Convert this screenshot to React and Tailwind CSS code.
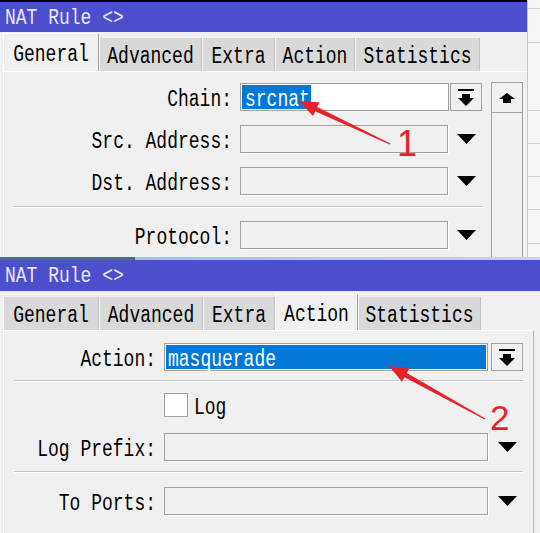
import React from "react";

const mono = "font-['Liberation_Mono',monospace]";

function T({ children, s = "scale-y-[1.35] translate-y-[2px]" }) {
  return <span className={`inline-block whitespace-pre ${s}`}>{children}</span>;
}

function TitleBar({ h }) {
  return (
    <div className={`${h} shrink-0 bg-[#4c4fcc] flex items-center pl-[5px] text-[18px] text-[#e8e8ff]`}>
      <T s="scale-y-[1.25] translate-y-[1px]">NAT Rule &lt;&gt;</T>
    </div>
  );
}

function Tabs({ tabs, active, activeH }) {
  return (
    <div className="h-[39px] shrink-0 flex items-end pl-[3px]">
      {tabs.map(([name, w]) =>
        name === active ? (
          <div
            key={name}
            className={`${w} ${activeH} bg-[#f0f0f0] border-t border-l border-white border-r border-r-[#a0a0a0] flex items-center justify-center text-[18px]`}
          >
            <T>{name}</T>
          </div>
        ) : (
          <div
            key={name}
            className={`${w} h-[33px] bg-[#d9d9d9] border-l border-l-[#f6f6f6] border-r border-r-[#c2c2c2] flex items-center justify-center text-[18px]`}
          >
            <T>{name}</T>
          </div>
        )
      )}
    </div>
  );
}

const BarArrow = () => (
  <svg width="16" height="17" viewBox="0 0 16 17">
    <rect x="0" y="0" width="16" height="2" fill="#000" />
    <path d="M4 5H12V9H16L8 17L0 9H4Z" fill="#000" />
  </svg>
);

const TriDown = () => (
  <svg width="19" height="10" viewBox="0 0 19 10">
    <path d="M0 0H19L9.5 10Z" fill="#000" />
  </svg>
);

const UpArrow = () => (
  <svg width="16" height="10" viewBox="0 0 16 10">
    <path d="M8 0L16 6H12V10H4V6H0Z" fill="#000" />
  </svg>
);

const DropBtn = () => (
  <div className="w-[32px] h-[28px] border border-[#a0a0a0] bg-[#f0f0f0] flex items-center justify-center">
    <BarArrow />
  </div>
);

const TriBox = () => (
  <div className="w-[32px] h-[28px] flex items-center justify-center">
    <TriDown />
  </div>
);

const Field = ({ w }) => (
  <div className={`${w} h-[28px] border border-[#a0a0a0] bg-[#f0f0f0] shadow-[1px_1px_0_#ffffff]`} />
);

const Sep = ({ className }) => (
  <div className={`h-[2px] border-t border-[#c4c4c4] border-b border-b-white ${className}`} />
);

function arrowPoints(tip, tail) {
  const dx = tip[0] - tail[0];
  const dy = tip[1] - tail[1];
  const len = Math.hypot(dx, dy);
  const ux = dx / len;
  const uy = dy / len;
  const px = -uy;
  const py = ux;
  const hl = 19;
  const hw = 7.5;
  const bx = tip[0] - ux * hl;
  const by = tip[1] - uy * hl;
  const pt = (x, y) => `${x.toFixed(1)},${y.toFixed(1)}`;
  return [
    pt(tail[0] + px * 0.6, tail[1] + py * 0.6),
    pt(bx + px * 2.4, by + py * 2.4),
    pt(bx + px * hw, by + py * hw),
    pt(tip[0], tip[1]),
    pt(bx - px * hw, by - py * hw),
    pt(bx - px * 2.4, by - py * 2.4),
    pt(tail[0] - px * 0.6, tail[1] - py * 0.6),
  ].join(" ");
}

const topTabs = [
  ["General", "w-[96px]"],
  ["Advanced", "w-[103px]"],
  ["Extra", "w-[73px]"],
  ["Action", "w-[80px]"],
  ["Statistics", "w-[125px]"],
];

const botTabs = [
  ["General", "w-[96px]"],
  ["Advanced", "w-[104px]"],
  ["Extra", "w-[72px]"],
  ["Action", "w-[83px]"],
  ["Statistics", "w-[123px]"],
];

export default function App() {
  return (
    <div className={`relative w-[540px] h-[533px] overflow-hidden bg-[#f0f0f0] text-black ${mono}`}>
      {/* Top window */}
      <div className="flex h-[257px]">
        <div className="w-[527px] flex flex-col">
          <div className="h-[2px] shrink-0 bg-black" />
          <TitleBar h="h-[30px]" />
          <div className="flex-1 flex flex-col bg-[#f0f0f0] overflow-hidden">
            <Tabs tabs={topTabs} active="General" activeH="h-[38px]" />
            <div className="flex-1 ml-[3px] border-t border-l border-white flex">
              <div className="w-[478px] flex flex-col pt-[11px] text-[18px]">
                <div className="h-[28px] flex items-center">
                  <div className="w-[228px] text-right"><T>Chain:</T></div>
                  <div className="ml-[8px] w-[209px] h-[28px] border border-[#a0a0a0] bg-white flex items-stretch p-px">
                    <div className="w-[69px] bg-[#0078d7] text-white pl-[3px] flex items-center">
                      <T>srcnat</T>
                    </div>
                  </div>
                  <div className="ml-[1px]"><DropBtn /></div>
                </div>
                <div className="mt-[14px] h-[28px] flex items-center">
                  <div className="w-[228px] text-right"><T>Src. Address:</T></div>
                  <div className="ml-[8px]"><Field w="w-[208px]" /></div>
                  <div className="ml-[2px]"><TriBox /></div>
                </div>
                <div className="mt-[14px] h-[28px] flex items-center">
                  <div className="w-[228px] text-right"><T>Dst. Address:</T></div>
                  <div className="ml-[8px]"><Field w="w-[208px]" /></div>
                  <div className="ml-[2px]"><TriBox /></div>
                </div>
                <Sep className="mt-[11px] ml-[9px] w-[470px]" />
                <div className="mt-[13px] h-[28px] flex items-center">
                  <div className="w-[228px] text-right"><T>Protocol:</T></div>
                  <div className="ml-[8px]"><Field w="w-[208px]" /></div>
                  <div className="ml-[2px]"><TriBox /></div>
                </div>
              </div>
              <div className="ml-[9px] w-[32px] pt-[10px] flex flex-col">
                <div className="h-[31px] border border-[#a0a0a0] bg-[#f0f0f0] flex items-center justify-center">
                  <UpArrow />
                </div>
                <div className="flex-1 border-l border-r border-[#a0a0a0] bg-[#f0f0f0]" />
              </div>
            </div>
          </div>
        </div>
        <div className="flex-1 border-l border-[#c8c8c8] bg-[#f5f5f5] flex flex-col">
          <div className="h-[8px]" />
          <div className="h-px bg-[#cfcfcf]" />
          <div className="h-[33px]" />
          <div className="h-px bg-[#cfcfcf]" />
          <div className="h-[67px]" />
          <div className="h-px bg-[#cfcfcf]" />
          <div className="h-[32px]" />
          <div className="h-px bg-[#cfcfcf]" />
          <div className="h-[32px]" />
          <div className="h-px bg-[#cfcfcf]" />
          <div className="h-[32px]" />
          <div className="h-px bg-[#cfcfcf]" />
          <div className="h-[33px]" />
          <div className="h-px bg-[#cfcfcf]" />
        </div>
      </div>

      {/* Strip between windows */}
      <div className="h-[3px] flex">
        <div className="w-[135px] bg-[#4a6a8e]" />
        <div className="flex-1 bg-gradient-to-r from-[#a9bfd4] to-[#c9d6e3]" />
      </div>

      {/* Bottom window */}
      <div className="h-[273px] flex flex-col">
        <TitleBar h="h-[31px]" />
        <div className="flex-1 flex flex-col bg-[#f0f0f0]">
          <Tabs tabs={botTabs} active="Action" activeH="h-[36px]" />
          <div className="flex-1 ml-[3px] w-[531px] border-t border-l border-white border-r border-r-[#b4b4b4] flex flex-col pt-[12px] text-[18px]">
            <div className="h-[28px] flex items-center">
              <div className="w-[152px] text-right"><T>Action:</T></div>
              <div className="ml-[8px] w-[324px] h-[28px] border border-[#a0a0a0] bg-white p-px flex">
                <div className="flex-1 bg-[#0078d7] text-white pl-[2px] flex items-center">
                  <T>masquerade</T>
                </div>
              </div>
              <div className="ml-[3px]"><DropBtn /></div>
            </div>
            <Sep className="mt-[9px] ml-[10px] w-[509px]" />
            <div className="mt-[11px] h-[24px] flex items-center">
              <div className="ml-[160px] w-[24px] h-[24px] border border-[#a0a0a0] bg-white" />
              <div className="ml-[6px]"><T>Log</T></div>
            </div>
            <div className="mt-[16px] h-[28px] flex items-center">
              <div className="w-[152px] text-right"><T>Log Prefix:</T></div>
              <div className="ml-[8px]"><Field w="w-[324px]" /></div>
              <div className="ml-[3px]"><TriBox /></div>
            </div>
            <Sep className="mt-[10px] ml-[10px] w-[509px]" />
            <div className="mt-[14px] h-[28px] flex items-center">
              <div className="w-[152px] text-right"><T>To Ports:</T></div>
              <div className="ml-[8px]"><Field w="w-[324px]" /></div>
              <div className="ml-[3px]"><TriBox /></div>
            </div>
          </div>
        </div>
      </div>

      {/* Red annotations */}
      <svg className="absolute left-0 top-0 pointer-events-none" width="540" height="533" viewBox="0 0 540 533">
        <polygon points={arrowPoints([299, 101], [390, 144])} fill="#e8202a" />
        <polygon points={arrowPoints([389, 366], [485, 419])} fill="#e8202a" />
      </svg>
      <span className="absolute left-[397px] top-[126px] text-[36px] leading-none text-[#e8202a] font-['Liberation_Sans',sans-serif]">
        1
      </span>
      <span className="absolute left-[490px] top-[400px] text-[35px] leading-none text-[#e8202a] font-['Liberation_Sans',sans-serif]">
        2
      </span>
    </div>
  );
}
